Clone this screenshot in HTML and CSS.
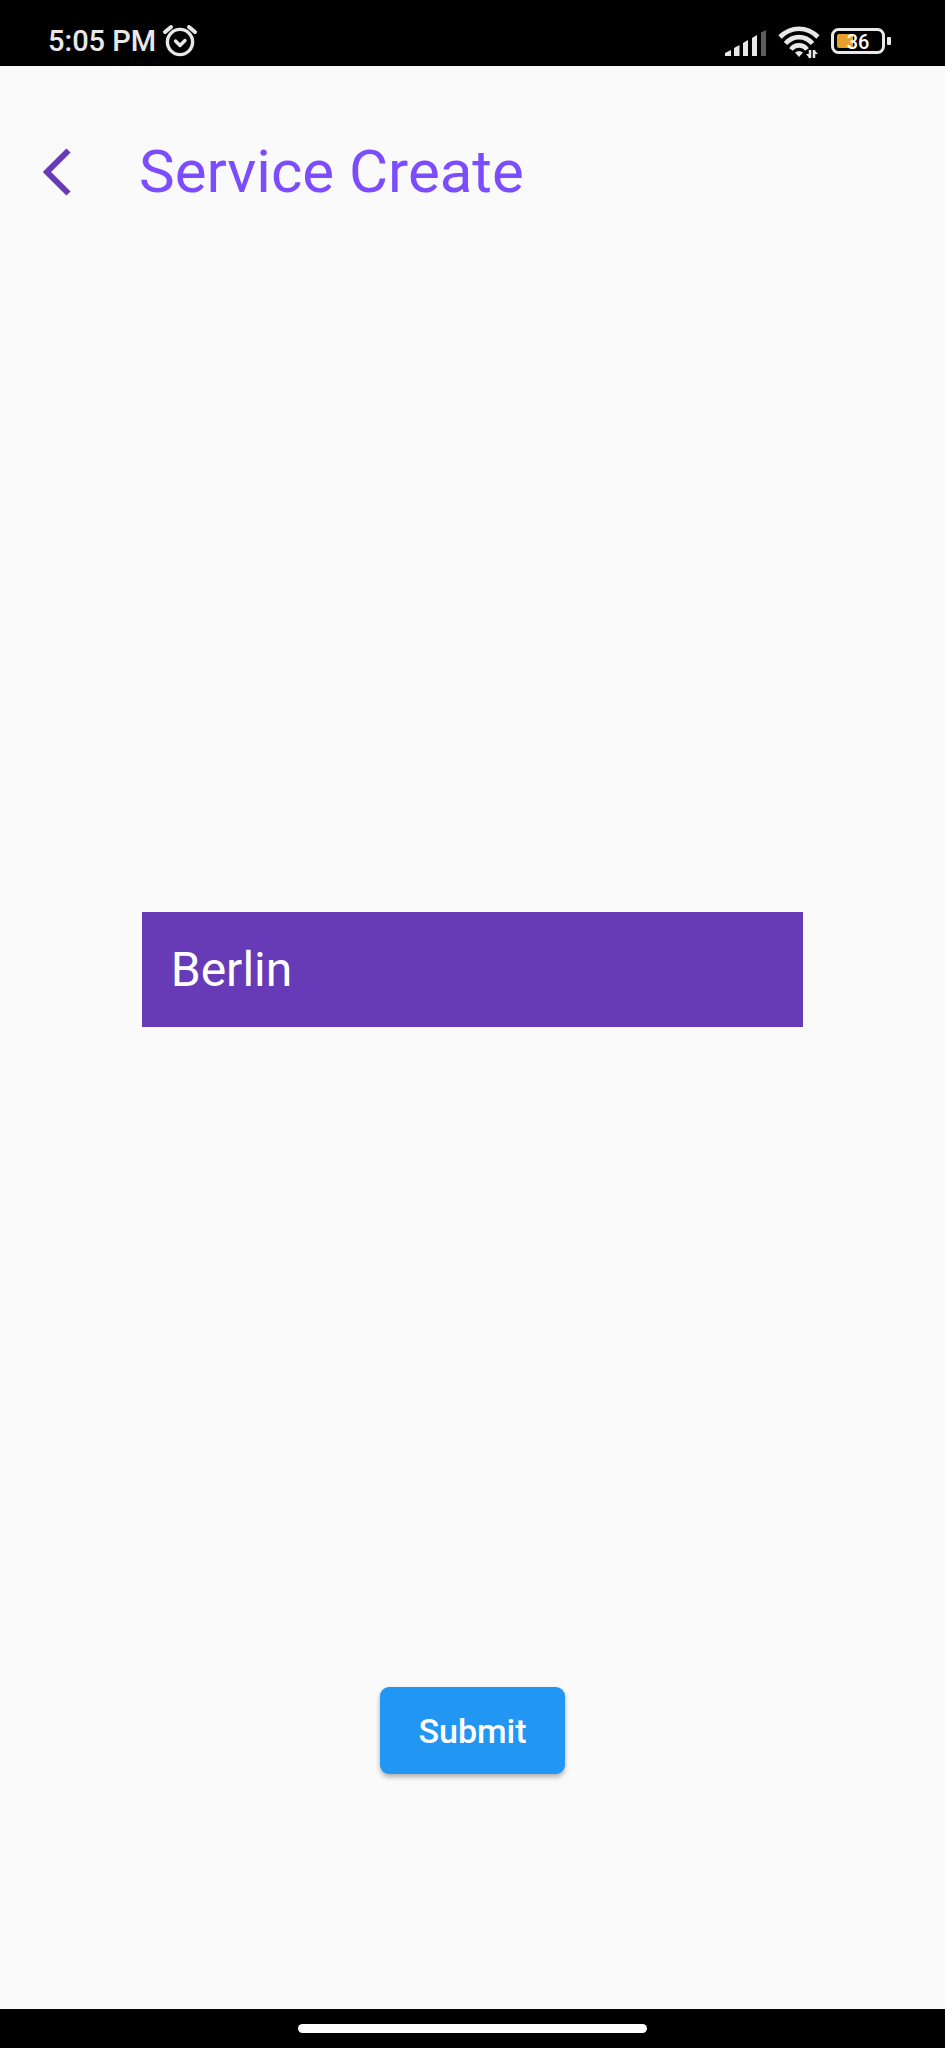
FILE: index.html
```html
<!DOCTYPE html>
<html lang="en">
<head>
<meta charset="utf-8">
<meta name="viewport" content="width=device-width, initial-scale=1">
<title>Service Create</title>
<link rel="stylesheet" href="styles.css">
</head>
<body>
<div class="screen">
  <div class="status-bar">
    <div class="status-group">
      <span class="time">5:05 PM</span>
      <svg class="alarm" width="36" height="36" viewBox="0 0 36 36" fill="none" stroke="#e8e8e8" stroke-width="3.4" stroke-linecap="round" stroke-linejoin="round">
        <circle cx="18" cy="19" r="12.6"/>
        <path d="M13.5 18l4.500 4.500 5-5"/>
        <path d="M3 9l6-5M33 9l-6-5" stroke-width="4"/>
      </svg>
    </div>
    <div class="status-group icons">
      <svg width="42" height="36" viewBox="0 0 42 36" fill="#e8e8e8">
        <path d="M0 33v-3l6-3v6zM9 33V25l5.500-3v11zM18 33V20l5-3v16zM27 33V15l5-3v21z"/>
        <path d="M36 33V9.500L41 7v26z" fill="#5c5c5c"/>
      </svg>
      <svg width="42" height="36" viewBox="0 0 42 36" fill="none" stroke="#e8e8e8" stroke-width="4.600">
        <path d="M2 14C13 3 29 3 40 14"/>
        <path d="M7.500 20.500C15 12 27 12 34.500 20.500"/>
        <path d="M13 26.500C17 21 25 21 29 26.500"/>
        <path d="M17 29.500Q21 26.500 25 29.500L21 34z" fill="#e8e8e8" stroke="none"/>
        <path d="M32 35v-8M36 27v8" stroke-width="2.500"/>
        <path d="M28 31h4v5zM36 27v-0l4 4h-4z" fill="#e8e8e8" stroke="none"/>
      </svg>
      <svg class="battery" width="60" height="28" viewBox="0 0 60 28">
        <rect x="1.500" y="2.500" width="51" height="23" rx="6" fill="none" stroke="#e8e8e8" stroke-width="3"/>
        <rect x="6" y="7" width="16" height="14" rx="2" fill="#e6a02c"/>
        <rect x="56" y="10" width="4" height="8" rx="1" fill="#e8e8e8"/>
        <text class="level" x="27" y="22" text-anchor="middle">36</text>
      </svg>
    </div>
  </div>
  <header class="app-bar">
    <button class="back" type="button" aria-label="Back">
      <svg width="32" height="50" viewBox="0 0 32 50" fill="none" stroke="#673ab7" stroke-width="6">
        <path d="M28.500 3.500L7 25l21.500 21.500"/>
      </svg>
    </button>
    <h1 class="title">Service Create</h1>
  </header>
  <form class="form">
    <input class="city" type="text" value="Berlin" aria-label="City">
    <button class="submit" type="button">Submit</button>
  </form>
  <div class="nav-bar"><div class="handle"></div></div>
</div>
</body>
</html>
```
FILE: styles.css
```css
* {
  box-sizing: border-box;
}

body {
  margin: 0;
  background: #fafafa;
  font-family: Roboto, sans-serif;
}

.screen {
  display: flex;
  flex-direction: column;
  min-height: 100vh;
}

.status-bar {
  display: flex;
  justify-content: space-between;
  align-items: flex-end;
  height: 66px;
  padding: 0 54px 7px 48px;
  background: #000;
  color: #e8e8e8;
}

.status-group {
  display: flex;
  align-items: center;
  gap: 6px;
}

.icons {
  gap: 11px;
}

.time {
  font-size: 29px;
  font-weight: 500;
  line-height: 34px;
}

.level {
  font-size: 20px;
  font-weight: 500;
  fill: #fff;
}

.app-bar {
  display: flex;
  align-items: center;
  gap: 67px;
  height: 211px;
  padding: 0 40px;
}

.back {
  display: flex;
  padding: 0;
  border: 0;
  background: none;
}

.title {
  margin: 0;
  color: #7c4dff;
  font-size: 60px;
  font-weight: 400;
  line-height: 70px;
}

.form {
  flex: 1;
  display: grid;
  grid-template-rows: 635fr auto 660fr auto 235fr;
  justify-items: center;
}

.city {
  grid-row: 2;
  width: 70%;
  height: 115px;
  padding: 0 29px;
  border: 0;
  border-radius: 0;
  background: #673ab7;
  color: #fff;
  font-family: inherit;
  font-size: 48px;
}

.submit {
  grid-row: 4;
  height: 87px;
  padding: 0 38px;
  border: 0;
  border-radius: 9px;
  background: #2196f3;
  box-shadow: 0 3px 5px rgba(0, 0, 0, 0.3);
  color: #fff;
  font-family: inherit;
  font-size: 34px;
  font-weight: 500;
}

.nav-bar {
  display: flex;
  justify-content: center;
  align-items: center;
  height: 39px;
  background: #000;
}

.handle {
  width: 37%;
  height: 9px;
  border-radius: 5px;
  background: #fff;
}
```
